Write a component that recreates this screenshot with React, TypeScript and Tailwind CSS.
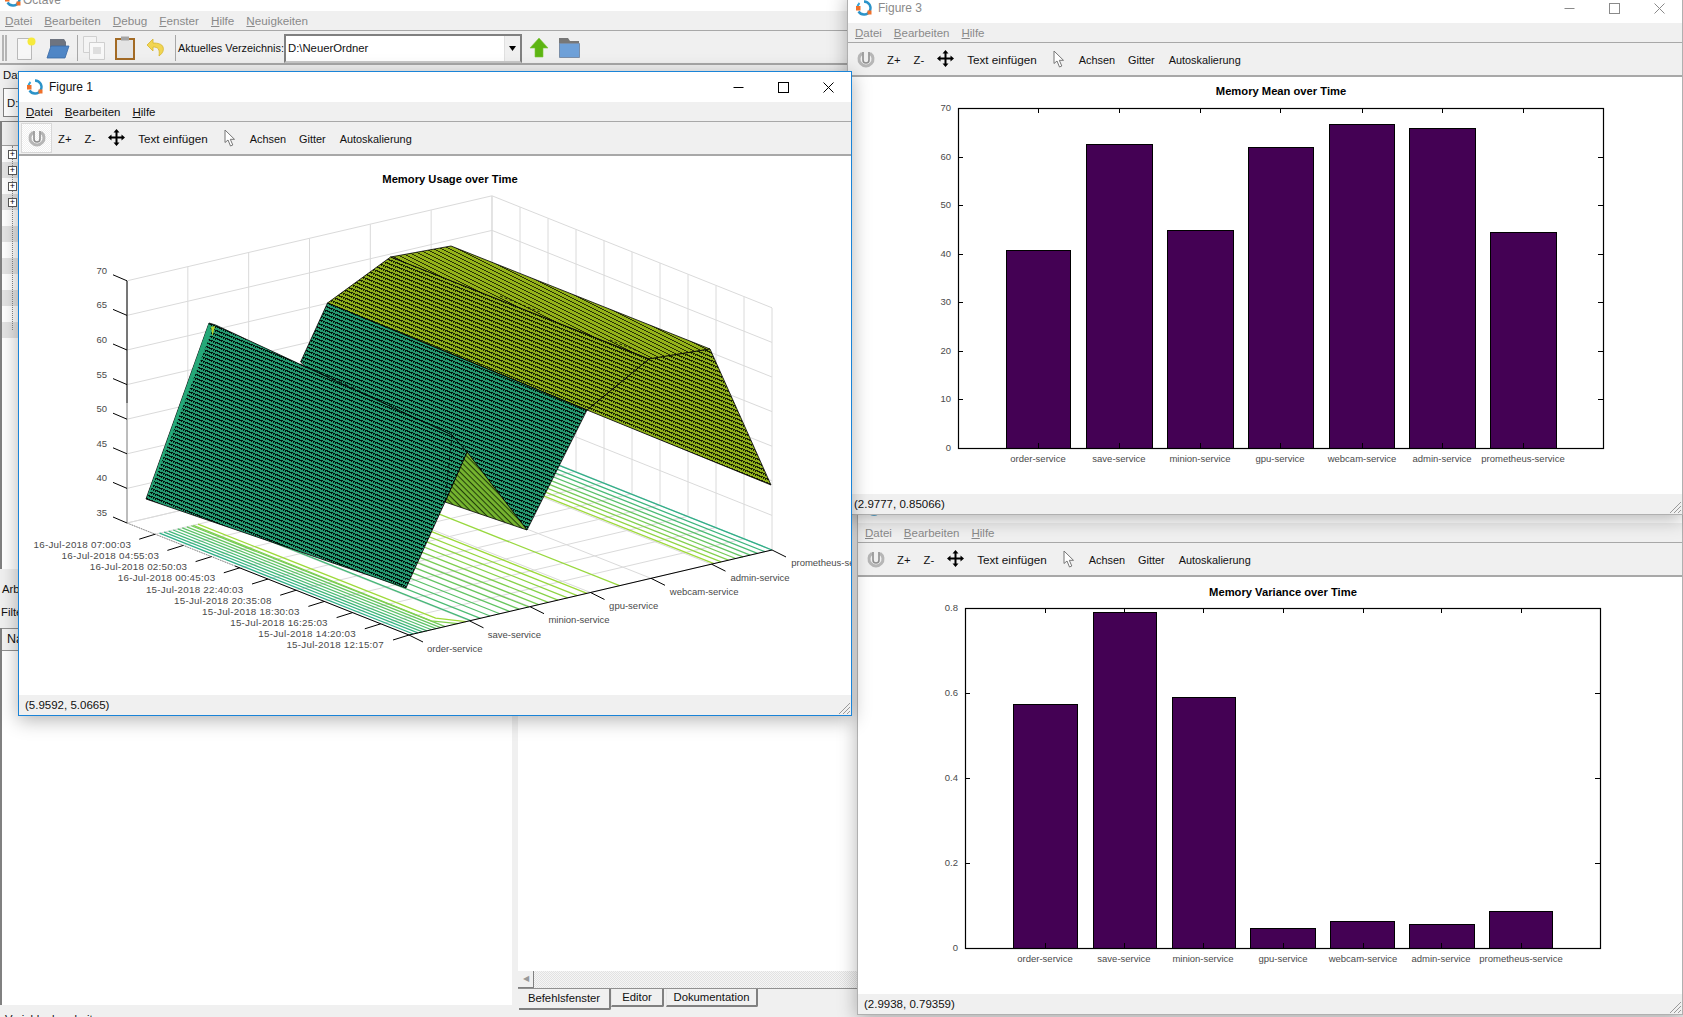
import type { ReactNode } from 'react';

const services = ['order-service', 'save-service', 'minion-service', 'gpu-service', 'webcam-service', 'admin-service', 'prometheus-service'];
const dates = [
  '15-Jul-2018 12:15:07', '15-Jul-2018 14:20:03', '15-Jul-2018 16:25:03', '15-Jul-2018 18:30:03', '15-Jul-2018 20:35:08',
  '15-Jul-2018 22:40:03', '16-Jul-2018 00:45:03', '16-Jul-2018 02:50:03', '16-Jul-2018 04:55:03', '16-Jul-2018 07:00:03',
];
const LABEL = '#4a4a4a';

const range = (n: number) => Array.from({ length: n }, (_, i) => i);

const OctaveLogo = ({ className = '' }: { className?: string }) => (
  <svg width="18" height="18" viewBox="0 0 18 18" className={`shrink-0 ${className}`}>
    <path d="M9 2.5a6.5 6.5 0 1 1 -5.5 10" fill="none" stroke="#2b93c9" strokeWidth="2.4" />
    <path d="M4.5 4 a6.5 6.5 0 0 0 -2 5" fill="none" stroke="#35a3d6" strokeWidth="2" />
    <rect x="1" y="7" width="4.5" height="4.5" fill="#f0702a" />
    <rect x="12.5" y="11.5" width="4" height="4" fill="#f0702a" />
  </svg>
);

const WinControls = ({ color }: { color: string }) => (
  <div className="ml-auto flex h-full">
    <div className="flex w-[45px] items-center justify-center">
      <svg width="11" height="11" viewBox="0 0 11 11"><path d="M0.5 5.5h10" stroke={color} /></svg>
    </div>
    <div className="flex w-[45px] items-center justify-center">
      <svg width="11" height="11" viewBox="0 0 11 11"><rect x="0.5" y="0.5" width="10" height="10" fill="none" stroke={color} /></svg>
    </div>
    <div className="flex w-[45px] items-center justify-center">
      <svg width="11" height="11" viewBox="0 0 11 11"><path d="M0.5 0.5l10 10M10.5 0.5l-10 10" stroke={color} /></svg>
    </div>
  </div>
);

const Mnemonic = ({ text }: { text: string }) => (
  <span><span className="underline">{text[0]}</span>{text.slice(1)}</span>
);

const RotateIcon = () => (
  <svg width="20" height="20" viewBox="0 0 20 20">
    <path d="M6 4.2a7 7 0 1 0 8 0" fill="none" stroke="#b6b6b6" strokeWidth="3" />
    <path d="M7 3v8a3 3 0 0 0 6 0V3" fill="none" stroke="#8f8f8f" strokeWidth="1.6" />
  </svg>
);

const MoveIcon = () => (
  <svg width="17" height="17" viewBox="0 0 17 17" className="shrink-0">
    <path d="M8.5 2v13M2 8.5h13" stroke="#000" strokeWidth="2" />
    <path d="M8.5 0l3 3.5h-6zM8.5 17l3-3.5h-6zM0 8.5l3.5-3v6zM17 8.5l-3.5-3v6z" fill="#000" />
  </svg>
);

const PointerIcon = () => (
  <svg width="12" height="18" viewBox="0 0 12 18" className="shrink-0">
    <path d="M1 1v12.5l3-2.5 2.5 6 2.3-1-2.5-5.7h4.2z" fill="#fff" stroke="#777" strokeWidth="1" />
  </svg>
);

const FigToolbar = ({ pressed = false }: { pressed?: boolean }) => (
  <div className="flex h-[34px] shrink-0 items-center border-b-2 border-[#a8a8a8] bg-[#f0f0f0] pl-[2px] text-[#111]">
    <div className={`flex h-[30px] w-[31px] items-center justify-center ${pressed ? 'border border-[#d8d8d8] bg-[repeating-conic-gradient(#f0f0f0_0_25%,#ffffff_0_50%)] bg-[length:2px_2px]' : ''}`}>
      <RotateIcon />
    </div>
    <div className="ml-[6px] flex items-center pt-[2px]">
      <span>Z+</span>
      <span className="ml-[13px]">Z-</span>
      <span className="-mt-[2px] ml-[13px] flex"><MoveIcon /></span>
      <span className="ml-[13px] text-[11.7px]">Text einfügen</span>
      <span className="-mt-[2px] ml-[16px] flex"><PointerIcon /></span>
      <span className="ml-[14px] text-[10.9px]">Achsen</span>
      <span className="ml-[13px] text-[10.9px]">Gitter</span>
      <span className="ml-[14px] text-[10.9px]">Autoskalierung</span>
    </div>
  </div>
);

const Grip = () => (
  <svg width="14" height="14" viewBox="0 0 14 14" className="absolute bottom-0 right-0">
    <path d="M13 2L2 13M13 6L6 13M13 10L10 13" stroke="#9a9a9a" strokeWidth="1" />
  </svg>
);

const FigureWindow = ({ className, name, active = false, status, children }: {
  className: string; name: string; active?: boolean; status: string; children: ReactNode;
}) => (
  <div className={`absolute flex flex-col border bg-white shadow-[0_4px_18px_rgba(0,0,0,0.3)] ${className}`}>
    <div className={`flex h-[30px] shrink-0 items-center bg-white pl-[7px] text-[12px] ${active ? 'text-[#111]' : 'text-[#8a8a8a]'}`}>
      <OctaveLogo />
      <span className="ml-[5px]">{name}</span>
      <WinControls color={active ? '#000' : '#8a8a8a'} />
    </div>
    <div className={`flex h-[20px] shrink-0 items-center gap-[12px] border-b border-[#a8a8a8] bg-[#f0f0f0] pl-[7px] pt-[2px] text-[11.5px] ${active ? 'text-[#111]' : 'text-[#8a8a8a]'}`}>
      <Mnemonic text="Datei" />
      <Mnemonic text="Bearbeiten" />
      <Mnemonic text="Hilfe" />
    </div>
    <FigToolbar pressed={active} />
    <div className="min-h-0 flex-1 overflow-hidden bg-white">{children}</div>
    <div className="relative flex h-[20px] shrink-0 items-center bg-[#f0f0f0] pl-[6px] pt-[2px] text-[11.5px] text-[#111]">
      {status}
      <Grip />
    </div>
  </div>
);

type BarSpec = { viewBox: string; w: number; h: number; title: string; titleX: number; titleY: number; left: number; right: number; top: number; bottom: number;
  ticks: number[]; bars: [number, number, number][]; yLabels: string[] };

const BarChart = ({ viewBox, w, h, title, titleX, titleY, left, right, top, bottom, ticks, bars, yLabels }: BarSpec) => (
  <svg width={w} height={h} viewBox={viewBox} className="block" fontFamily="'Liberation Sans', sans-serif">
    <text x={titleX} y={titleY + 4} textAnchor="middle" fontSize="11.2" fontWeight="700" fill="#000">{title}</text>
    {bars.map(([x1, x2, y], i) => (
      <rect key={i} x={x1 + 0.5} y={y + 0.5} width={x2 - x1} height={bottom - y} fill="#440154" stroke="#000" />
    ))}
    <rect x={left + 0.5} y={top + 0.5} width={right - left} height={bottom - top} fill="none" stroke="#000" strokeWidth="1.2" />
    {ticks.map((x, i) => (
      <g key={x}>
        <path d={`M${x + 0.5} ${top}v5M${x + 0.5} ${bottom}v-5`} stroke="#000" />
        <text x={x} y={bottom + 14} textAnchor="middle" fontSize="9.5" fill={LABEL}>{services[i]}</text>
      </g>
    ))}
    {yLabels.map((label, i) => {
      const y = bottom - (i * (bottom - top)) / (yLabels.length - 1);
      return (
        <g key={label}>
          <path d={`M${left} ${Math.round(y) + 0.5}h5M${right} ${Math.round(y) + 0.5}h-5`} stroke="#000" />
          <text x={left - 7} y={y + 3} textAnchor="end" fontSize="9.5" fill={LABEL}>{label}</text>
        </g>
      );
    })}
  </svg>
);

// aliased mesh lines of the surface, one stair-stepped stripe per tile
const HatchTile = ({ id, fill, ink, w, p, thick }: { id: string; fill: string; ink: string; w: number; p: number; thick: boolean }) => (
  <pattern id={id} width={w} height={p} patternUnits="userSpaceOnUse">
    <rect width={w} height={p} fill={fill} shapeRendering="crispEdges" />
    {range(w).map((x) => {
      const y = Math.floor((x * p) / w) % p;
      return (
        <g key={x} fill={ink} shapeRendering="crispEdges">
          <rect x={x} y={y} width="1" height="1" />
          {thick && x % 2 === 1 && <rect x={x} y={(y + 1) % p} width="1" height="1" />}
        </g>
      );
    })}
  </pattern>
);

// floor of the 3d plot: u runs along the services, v along the dates
const floorPt = (u: number, v: number) => `${409 + 363 * u - 282 * v},${635 - 85 * u - 112 * v}`;
const mix = (t: number) => {
  const a = [47, 176, 136];
  const b = [158, 218, 58];
  return `rgb(${a.map((c, i) => Math.round(c + (b[i] - c) * t)).join(',')})`;
};

const SurfacePlot = () => (
  <svg width="832" height="539" viewBox="19 156 832 539" className="block" fontFamily="'Liberation Sans', sans-serif">
    <defs>
      <HatchTile id="hatchDark" fill="#259a70" ink="#03120c" w={10} p={4} thick />
      <HatchTile id="hatchOlive" fill="#8fb01c" ink="#1a2004" w={10} p={4} thick />
      <HatchTile id="hatchTop" fill="#94b21a" ink="#2a3206" w={8} p={4} thick={false} />
      <pattern id="hatchValley" width="4" height="4" patternUnits="userSpaceOnUse" patternTransform="rotate(45)">
        <rect width="4" height="4" fill="#76b52f" />
        <rect width="4" height="1.1" fill="#24400c" />
      </pattern>
    </defs>
    <text x="450" y="183" textAnchor="middle" fontSize="11.2" fontWeight="700" fill="#000">Memory Usage over Time</text>

    {/* walls */}
    <g stroke="#dadada" fill="none">
      {range(8).map((k) => (
        <path key={`a${k}`} d={`M127 ${523 - k * 34.6}L492 ${438 - k * 34.6}L772 ${550 - k * 34.6}`} />
      ))}
      {range(7).map((i) => (
        <path key={`b${i}`} d={`M${127 + 60.83 * i} ${523 - 14.17 * i}v-242`} />
      ))}
      {range(11).map((i) => (
        <path key={`c${i}`} d={`M${492 + 28 * i} ${438 + 11.2 * i}v-242`} />
      ))}
      {range(7).map((i) => (
        <polyline key={`d${i}`} points={`${floorPt(i / 6, 0)} ${floorPt(i / 6, 1)}`} />
      ))}
      {range(11).map((j) => (
        <polyline key={`e${j}`} points={`${floorPt(0, j / 10)} ${floorPt(1, j / 10)}`} />
      ))}
    </g>

    {/* contour lines on the floor */}
    <g fill="none" strokeWidth="1.3">
      {range(8).map((i) => (
        <polyline key={i} points={`${floorPt(0.012 + i * 0.0125, 0)} ${floorPt(0.012 + i * 0.0125, 0.9)}`} stroke={mix(i / 12)} />
      ))}
      <polyline points={`${floorPt(0.135, 0)} ${floorPt(0.1, 0.05)} ${floorPt(0.105, 0.9)}`} stroke={mix(0.75)} />
      <polyline points={`${floorPt(0.157, 0)} ${floorPt(0.12, 0.06)} ${floorPt(0.118, 0.9)}`} stroke={mix(1)} />
      {range(13).map((i) => (
        <polyline key={i} points={`${floorPt(0.17 + i * 0.0267, 0)} ${floorPt(0.17 + i * 0.0267, 0.9)}`} stroke={mix(0.2 + (i / 12) * 0.8)} />
      ))}
      <polyline points={`${floorPt(0.58, 0)} ${floorPt(0.58, 0.9)}`} stroke={mix(0.95)} />
      {range(9).map((i) => (
        <polyline key={i} points={`${floorPt(0.84 + i * 0.02, 0)} ${floorPt(0.84 + i * 0.02, 0.9)}`} stroke={mix(1 - i / 8)} />
      ))}
    </g>

    {/* axes */}
    <path d="M127 281V403" stroke="#000" />
    <path d="M127 403V523" stroke="#8c8c8c" />
    <path d="M127 523L235 566" stroke="#8c8c8c" strokeDasharray="1.5 1" />
    <path d="M235 566L409 635L772 550" stroke="#000" fill="none" />
    {range(8).map((k) => {
      const y = 523 - k * 34.6;
      return (
        <g key={k}>
          <path d={`M113 ${y - 6}L127 ${y}`} stroke="#000" />
          <text x="107" y={y - 7} textAnchor="end" fontSize="9.5" fill={LABEL}>{35 + k * 5}</text>
        </g>
      );
    })}
    {dates.map((d, i) => (
      <g key={d}>
        <path d={`M${409 - 28.2 * i} ${635 - 11.2 * i}l-16 5`} stroke="#000" />
        <text x={384 - 28.1 * i} y={648 - 11.1 * i} textAnchor="end" fontSize="9.8" letterSpacing="0.25" fill={LABEL}>{d}</text>
      </g>
    ))}
    {services.map((s, i) => (
      <g key={s}>
        <path d={`M${409 + 60.5 * i} ${635 - 14.17 * i}l14 7`} stroke="#000" />
        <text x={427 + 60.7 * i} y={652 - 14.3 * i} fontSize="9.5" fill={LABEL}>{s}</text>
      </g>
    ))}

    {/* surface */}
    <polygon points="390.6,257 451,246 710,349 649,359" fill="url(#hatchTop)" stroke="#000" strokeWidth="0.8" />
    <polygon points="649,359 710,349 771,485 587,410" fill="url(#hatchOlive)" stroke="#000" strokeWidth="0.8" />
    <polygon points="390.6,257 649,359 587,410 327.5,303" fill="url(#hatchOlive)" stroke="#000" strokeWidth="0.8" />
    <path d="M500 296l40 16M610 340l30 12" stroke="#000" strokeWidth="0.8" strokeDasharray="3 2" />
    <polygon points="327.5,303 587,410 527,530 467,452 445,502 300.6,362" fill="url(#hatchDark)" stroke="#000" strokeWidth="0.8" />
    <polygon points="467,452 527,530 445,502" fill="url(#hatchValley)" stroke="#000" strokeWidth="0.8" />
    <polygon points="146,499 209,323 215.6,325 452,435 467,452 445,502 406,588" fill="url(#hatchDark)" stroke="#000" strokeWidth="0.8" />
    <polygon points="209,323 211.5,332 150,492 147,497" fill="#25a878" />
    <polygon points="211,327 215,326 212.5,336" fill="#b6d22a" />
    <path d="M300 364l60 27 60 30M452 435l-7 67" stroke="#000" strokeWidth="0.7" strokeDasharray="4 3" fill="none" />
  </svg>
);

const MenuBar = () => (
  <div className="flex h-[20px] shrink-0 items-center gap-[12px] border-b border-[#a8a8a8] bg-[#f0f0f0] pl-[5px] text-[11.7px] text-[#8a8a8a]">
    {['Datei', 'Bearbeiten', 'Debug', 'Fenster', 'Hilfe', 'Neuigkeiten'].map((m) => (
      <Mnemonic key={m} text={m} />
    ))}
  </div>
);

const MainToolbar = () => (
  <div className="flex h-[34px] shrink-0 items-center border-b-2 border-[#a8a8a8] bg-[#f0f0f0] pt-[2px] text-[11.3px] text-[#111]">
    <div className="ml-[2px] h-[26px] w-[5px] border-x-2 border-[#b4b4b4]" />
    <svg width="19" height="23" viewBox="0 0 19 23" className="ml-[10px] shrink-0">
      <path d="M0.5 1.5h14v21h-14z" fill="#f7f7f7" stroke="#b9b9b9" />
      <circle cx="14.5" cy="4.5" r="4" fill="#f6ea3c" />
    </svg>
    <svg width="24" height="21" viewBox="0 0 24 21" className="ml-[10px] shrink-0">
      <path d="M4 1h14l2 3v5H4z" fill="#6e7480" />
      <path d="M5 8h18l-4 12H1z" fill="#4f86c6" stroke="#3a6aa5" strokeWidth="0.8" />
    </svg>
    <div className="ml-[7px] h-[26px] w-px bg-[#a8a8a8]" />
    <svg width="22" height="24" viewBox="0 0 22 24" className="ml-[5px] shrink-0">
      <path d="M0.5 0.5h13v16h-13z" fill="#f4f4f4" stroke="#d0d0d0" />
      <path d="M6.5 6.5h15v17h-15z" fill="#f8f8f8" stroke="#cfcfcf" />
      <path d="M10 11h8v7h-8z" fill="#dedede" />
    </svg>
    <svg width="20" height="24" viewBox="0 0 20 24" className="ml-[10px] shrink-0">
      <path d="M1 3h18v20H1z" fill="#e4e4e4" stroke="#a36b25" strokeWidth="2" />
      <path d="M6 0.5h8v4H6z" fill="#a4a4a4" />
    </svg>
    <svg width="20" height="20" viewBox="0 0 20 20" className="ml-[11px] shrink-0">
      <path d="M7 1L1 7l6 6V9c5 0 7 2 6 9 4-3 5-6 4-9-1-3-5-4-10-4z" fill="#f1d552" stroke="#d5b52f" strokeWidth="0.8" />
    </svg>
    <div className="ml-[9px] h-[26px] w-px bg-[#a8a8a8]" />
    <span className="ml-[2px] w-[106px] shrink-0 whitespace-nowrap text-[10.9px]">Aktuelles Verzeichnis:</span>
    <div className="flex h-[29px] w-[238px] shrink-0 items-center border-2 border-b-[#c8c8c8] border-l-[#808080] border-r-[#808080] border-t-[#808080] bg-white pl-[2px]">
      <span>D:\NeuerOrdner</span>
      <div className="ml-auto flex h-full w-[16px] items-center justify-center border-l border-[#e0e0e0] bg-[#f0f0f0]">
        <svg width="7" height="5" viewBox="0 0 7 5"><path d="M0 0h7L3.5 5z" fill="#000" /></svg>
      </div>
    </div>
    <svg width="20" height="20" viewBox="0 0 20 20" className="ml-[7px] shrink-0">
      <path d="M10 0l9 10h-5v9H6v-9H1z" fill="#5db512" stroke="#7cc63a" strokeWidth="0.6" />
    </svg>
    <svg width="21" height="20" viewBox="0 0 21 20" className="ml-[10px] shrink-0">
      <path d="M0 0h9l2 3h9v5H0z" fill="#777" />
      <path d="M0.5 5.5h20v14h-20z" fill="#6ea0d8" stroke="#7a8ea8" />
    </svg>
  </div>
);

const TreeRows = () => (
  <div className="relative">
    <div className="absolute bottom-[8px] left-[10px] top-0 border-l border-dotted border-[#888]" />
    {range(12).map((i) => (
      <div key={i} className={`flex h-[16px] items-center pl-[6px] ${i % 2 === 1 ? 'bg-[#e4e4e4]' : 'bg-white'}`}>
        {i < 4 && (
          <div className="z-10 flex h-[9px] w-[9px] items-center justify-center border border-[#555] bg-white text-[9px] leading-none text-black">+</div>
        )}
      </div>
    ))}
  </div>
);

const LeftColumn = () => (
  <div className="flex w-[512px] shrink-0 flex-col">
    <div className="mx-[3px] mt-[2px] flex h-[29px] shrink-0 items-center border border-[#808080] bg-white pl-[3px] pt-[2px]">D:\NeuerOrdner</div>
    <div className="mt-[4px] h-[448px] shrink-0 overflow-hidden border-l-2 border-t border-[#808080] bg-white">
      <div className="h-[24px] border-b border-[#a0a0a0] bg-[#f0f0f0] pl-[4px]" />
      <TreeRows />
    </div>
    <div className="flex h-[59px] shrink-0 flex-col pl-[2px]">
      <span className="mt-[12px] h-[23px]">Arbeitsumgebung</span>
      <span className="-ml-px">Filter</span>
    </div>
    <div className="flex-1 border-l-2 border-[#808080] bg-white">
      <div className="flex h-[23px] items-center border-b border-t border-[#909090] bg-[#f4f4f4] pl-[5px] text-[12.5px]">Name</div>
    </div>
    <div className="h-[4px] shrink-0" />
  </div>
);

const RightColumn = () => (
  <div className="ml-[6px] flex flex-1 flex-col">
    <div className="flex-1 bg-white" />
    <div className="flex h-[17px] shrink-0 bg-[repeating-conic-gradient(#e2e2e2_0_25%,#f6f6f6_0_50%)] bg-[length:2px_2px]">
      <div className="flex w-[16px] items-center justify-center border-b border-r border-[#808080] bg-[#f0f0f0] text-[8px] text-[#999]">◀</div>
    </div>
    <div className="flex h-[21px] shrink-0 items-start border-t border-[#909090] pl-px">
      <div className="flex h-[21px] w-[92px] items-center justify-center rounded-br-[2px] border-b-2 border-r-2 border-[#808080]">Befehlsfenster</div>
      <div className="flex h-[18px] w-[53px] items-center justify-center rounded-br-[2px] border-b-2 border-l border-r-2 border-b-[#808080] border-l-[#e8e8e8] border-r-[#808080]">Editor</div>
      <div className="ml-[2px] flex h-[18px] w-[92px] items-center justify-center rounded-br-[2px] border-b-2 border-l border-r-2 border-b-[#808080] border-l-[#e8e8e8] border-r-[#808080]">Dokumentation</div>
    </div>
  </div>
);

const App = () => (
  <div className="relative h-[1017px] w-[1683px] overflow-hidden bg-[#f0f0f0] font-['Liberation_Sans',sans-serif] text-[11.3px] text-[#111]">
    {/* main octave window behind the figures */}
    <div className="flex h-full flex-col">
      <div className="flex h-[11px] shrink-0 items-start overflow-hidden bg-white pl-[4px] text-[12px] text-[#8a8a8a]">
        <OctaveLogo className="-mt-[10px]" />
        <span className="-mt-[7px] ml-[1px] leading-[14px]">Octave</span>
      </div>
      <MenuBar />
      <MainToolbar />
      <div className="flex h-[21px] shrink-0 items-center pl-[3px]">
        <span className="w-[484px]">Dateibrowser</span>
        <span>Befehlsfenster</span>
      </div>
      <div className="flex h-[923px] shrink-0">
        <LeftColumn />
        <RightColumn />
      </div>
      <div className="pl-[5px] pt-[2px]">Variablenbearbeitung</div>
    </div>

    <FigureWindow className="left-[857px] top-[492px] h-[523px] w-[826px] border-[#b0b0b0]" name="Figure 2" status="(2.9938, 0.79359)">
      <BarChart
        viewBox="858 577 824 417" w={824} h={417} title="Memory Variance over Time" titleX={1283} titleY={592}
        left={965} right={1600} top={608} bottom={948} ticks={[1045, 1124, 1203, 1283, 1363, 1441, 1521]}
        yLabels={['0', '0.2', '0.4', '0.6', '0.8']}
        bars={[[1013, 1077, 704], [1093, 1156, 612], [1172, 1235, 697], [1250, 1315, 928], [1330, 1394, 921], [1409, 1474, 924], [1489, 1552, 911]]}
      />
    </FigureWindow>

    <FigureWindow className="left-[847px] -top-[8px] h-[523px] w-[836px] border-[#b0b0b0]" name="Figure 3" status="(2.9777, 0.85066)">
      <BarChart
        viewBox="848 77 834 417" w={834} h={417} title="Memory Mean over Time" titleX={1281} titleY={91}
        left={958} right={1603} top={108} bottom={448} ticks={[1038, 1119, 1200, 1280, 1362, 1442, 1523]}
        yLabels={['0', '10', '20', '30', '40', '50', '60', '70']}
        bars={[[1006, 1070, 250], [1086, 1152, 144], [1167, 1233, 230], [1248, 1313, 147], [1329, 1394, 124], [1409, 1475, 128], [1490, 1556, 232]]}
      />
    </FigureWindow>

    <FigureWindow className="left-[18px] top-[71px] h-[645px] w-[834px] border-[#1a84d8]" name="Figure 1" active status="(5.9592, 5.0665)">
      <SurfacePlot />
    </FigureWindow>
  </div>
);

export default App;
